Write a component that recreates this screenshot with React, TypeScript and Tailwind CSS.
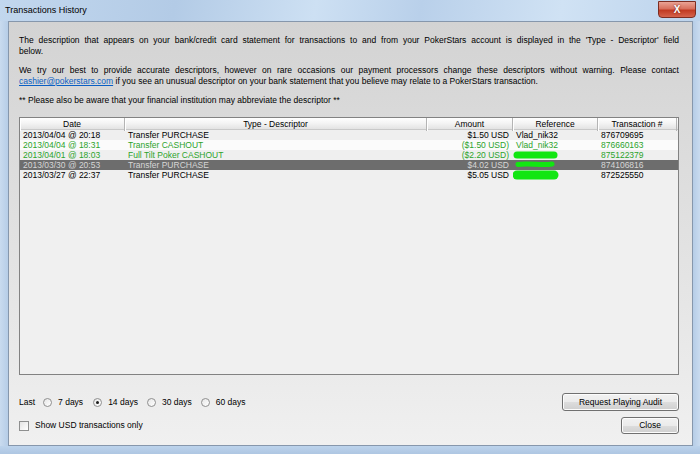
import React from 'react'

const ROWS = [
  { date: '2013/04/04 @ 20:18', type: 'Transfer PURCHASE', amount: '$1.50 USD', ref: 'Vlad_nik32', id: '876709695', tone: 'normal' },
  { date: '2013/04/04 @ 18:31', type: 'Transfer CASHOUT', amount: '($1.50 USD)', ref: 'Vlad_nik32', id: '876660163', tone: 'green' },
  { date: '2013/04/01 @ 18:03', type: 'Full Tilt Poker CASHOUT', amount: '($2.20 USD)', ref: '', id: '875122379', tone: 'green' },
  { date: '2013/03/30 @ 20:53', type: 'Transfer PURCHASE', amount: '$4.02 USD', ref: '', id: '874106816', tone: 'selected' },
  { date: '2013/03/27 @ 22:37', type: 'Transfer PURCHASE', amount: '$5.05 USD', ref: '', id: '872525550', tone: 'normal' },
]

const COLS = 'grid grid-cols-[105px_302px_86px_85px_79px_1fr]'
const HEAD = 'flex items-center justify-center border-r border-[#b4b4b4] shadow-[inset_1px_0_0_#ffffff]'
const JUST = 'whitespace-nowrap text-justify [text-align-last:justify]'
const BTN = 'flex items-center justify-center rounded-[3px] border border-[#707070] bg-[linear-gradient(#f2f2f2_0%,#ebebeb_50%,#dddddd_51%,#cfcfcf_100%)] shadow-[inset_0_0_0_1px_#fcfcfc] text-black'

function Radio({ label, checked, className = '' }: { label: string; checked?: boolean; className?: string }) {
  return (
    <label className={`flex items-center gap-[6px] ${className}`}>
      <span className="flex h-[9px] w-[9px] items-center justify-center rounded-full border border-[#8f8f8f] bg-[linear-gradient(135deg,#e6e6e6,#ffffff)]">
        {checked && <span className="h-[3px] w-[3px] rounded-full bg-[#1b1b1b]" />}
      </span>
      {label}
    </label>
  )
}

export default function App() {
  return (
    <div className="flex h-[454px] w-[700px] flex-col overflow-hidden bg-[#bcd3ec] font-['Liberation_Sans',Arial,sans-serif] text-[8.5px] text-black">
      {/* Title bar */}
      <div className="relative flex h-[21px] items-center bg-[linear-gradient(100deg,#c2d7ee_0%,#b3cbe6_25%,#cde0f3_45%,#b9d0ea_60%,#d0e2f4_80%,#bcd3ec_100%)] pl-[5px]">
        <span className="text-[9px]">Transactions History</span>
        <div className="absolute right-[4px] top-[1px] flex h-[17px] w-[38px] items-center justify-center rounded-b-[4px] border border-[#7c2d22] bg-[linear-gradient(#eaa395_0%,#d8705d_45%,#c13a22_55%,#d5634c_100%)] text-[10px] font-bold text-white [text-shadow:0_0_2px_#6b1a10]">
          X
        </div>
      </div>

      <div className="flex flex-1">
        <div className="w-[8px] bg-[linear-gradient(90deg,#c9dbef,#b6cde7)]" />
        <div className="flex flex-1 flex-col border border-[#8697ac] bg-[linear-gradient(#d3d3d3,#e4e4e4_60%,#f0f0f0)] pl-[10px] pr-[13px] pt-[13px]">
          {/* Description */}
          <div className="leading-[11px]">
            <div className={JUST}>
              The description that appears on your bank/credit card statement for transactions to and from your PokerStars account is displayed in the 'Type - Descriptor' field
            </div>
            <div>below.</div>
            <div className={`mt-[8px] ${JUST}`}>
              We try our best to provide accurate descriptors, however on rare occasions our payment processors change these descriptors without warning. Please contact
            </div>
            <div className="whitespace-nowrap">
              <span className="text-[#0a5fc4] underline">cashier@pokerstars.com</span> if you see an unusual descriptor on your bank statement that you believe may relate to a PokerStars transaction.
            </div>
            <div className="mt-[8px]">** Please also be aware that your financial institution may abbreviate the descriptor **</div>
          </div>

          {/* Table */}
          <div className="relative mt-[11px] h-[258px] border border-[#828282] bg-[#f0f0f0]">
            <div className={`${COLS} h-[12px] border-b border-[#c9c9c9] bg-[linear-gradient(#ffffff,#f3f3f3_50%,#e3e3e3)]`}>
              <div className={HEAD}>Date</div>
              <div className={HEAD}>Type - Descriptor</div>
              <div className={HEAD}>Amount</div>
              <div className={HEAD}>Reference</div>
              <div className={HEAD}>Transaction #</div>
              <div />
            </div>
            {ROWS.map((r, i) => {
              const bg = r.tone === 'selected' ? 'bg-[#6d6d6d]' : i % 2 === 0 ? 'bg-[#efefef]' : 'bg-[#fbfbfb]'
              const fg = r.tone === 'selected' ? 'text-[#d6d6d6]' : r.tone === 'green' ? 'text-[#2ba32b]' : 'text-black'
              return (
                <div key={r.id} className={`${COLS} h-[10px] items-center leading-[10px] ${bg} ${fg}`}>
                  <div className="pl-[3px]">{r.date}</div>
                  <div className="pl-[3px]">{r.type}</div>
                  <div className="pr-[4px] text-right">{r.amount}</div>
                  <div className="pl-[3px]">{r.ref}</div>
                  <div className="pl-[3px]">{r.id}</div>
                  <div />
                </div>
              )
            })}
            {/* marker scribbles over the reference column */}
            <svg className="absolute left-[493px] top-[31px]" width="50" height="34" viewBox="0 0 50 34">
              <g stroke="#12e612" strokeLinecap="round" fill="none">
                <path d="M4 6 L41 6" strokeWidth="7" />
                <path d="M5 15.5 C15 13.5 29 17 39 15" strokeWidth="5" />
                <path d="M4 26 L41 26" strokeWidth="9" />
              </g>
            </svg>
          </div>

          {/* Bottom controls */}
          <div className="mt-[18px] flex justify-between">
            <div className="flex flex-col">
              <div className="flex h-[18px] items-center">
                <span className="mr-[8px]">Last</span>
                <Radio label="7 days" />
                <Radio label="14 days" checked className="ml-[10px]" />
                <Radio label="30 days" className="ml-[9px]" />
                <Radio label="60 days" className="ml-[9px]" />
              </div>
              <div className="mt-[6px] flex h-[17px] items-center gap-[6px]">
                <span className="h-[10px] w-[10px] border border-[#8e8f8f] bg-[linear-gradient(135deg,#e4e4e4,#ffffff)]" />
                Show USD transactions only
              </div>
            </div>
            <div className="flex flex-col items-end">
              <button className={`${BTN} h-[18px] w-[117px]`}>Request Playing Audit</button>
              <button className={`${BTN} mt-[6px] h-[17px] w-[58px]`}>Close</button>
            </div>
          </div>
        </div>
        <div className="w-[7px] bg-[linear-gradient(90deg,#b6cde7,#c9dbef)]" />
      </div>
      <div className="h-[8px] bg-[linear-gradient(#bcd3ec,#aec6e2)]" />
    </div>
  )
}
